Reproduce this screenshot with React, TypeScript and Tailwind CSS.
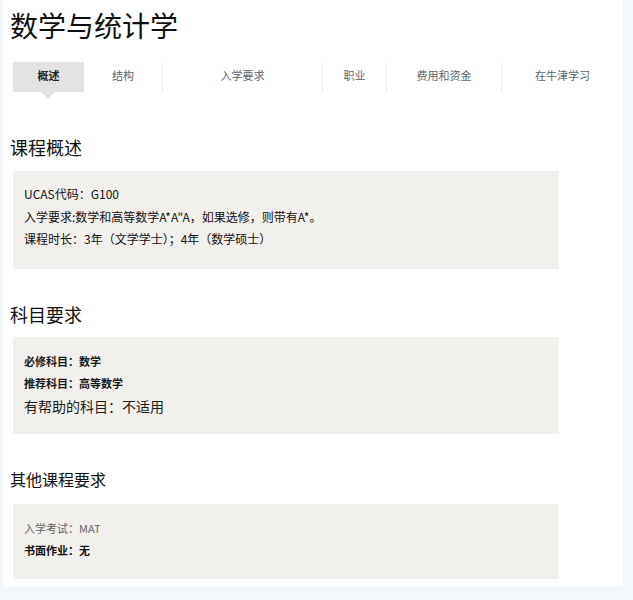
const font = { fontFamily: '"Noto Sans CJK SC", "Noto Sans", sans-serif' };

const tabs = [
  { label: "结构", w: "w-[78px]" },
  { label: "入学要求", w: "w-[160px]" },
  { label: "职业", w: "w-[64px]" },
  { label: "费用和资金", w: "w-[115px]" },
  { label: "在牛津学习", w: "w-[122px]" },
];

export default function App() {
  return (
    <div className="min-h-[600px] w-[633px] bg-[#f3f8fd] pl-[3px]" style={font}>
      <div className="w-[620px] h-[587px] bg-white">
        <h1 className="pl-[7px] pt-[6px] text-[28px] leading-[38px] text-[#111]">
          数学与统计学
        </h1>

        <div className="mt-[18px] ml-[10px] flex h-[30px] items-stretch">
          <div className="relative flex w-[71px] items-center justify-center bg-[#e3e3e1] pb-[4px] text-[11px] font-bold text-[#222]">
            概述
            <span className="absolute left-[28px] top-[30px] h-0 w-0 border-x-[7px] border-t-[7px] border-x-transparent border-t-[#e3e3e1]" />
          </div>
          {tabs.map((t, i) => (
            <div
              key={t.label}
              className={`flex items-center justify-center pb-[4px] text-[11px] text-[#5b6670] ${t.w} ${
                i > 0 ? "border-l border-[#ebebeb]" : ""
              }`}
            >
              {t.label}
            </div>
          ))}
        </div>

        <h2 className="mt-[43px] pl-[7px] text-[18px] leading-[24px] text-[#111]">课程概述</h2>
        <div className="ml-[10px] mt-[12px] h-[98px] w-[546px] bg-[#f1f0ec] pl-[11px] pt-[12px] text-[12px] leading-[22.5px] text-[#111]">
          <p>UCAS代码：G100</p>
          <p>入学要求:数学和高等数学A*A"A，如果选修，则带有A*。</p>
          <p>课程时长：3年（文学学士）；4年（数学硕士）</p>
        </div>

        <h2 className="mt-[33px] pl-[7px] text-[18px] leading-[24px] text-[#111]">科目要求</h2>
        <div className="ml-[10px] mt-[11px] h-[97px] w-[546px] bg-[#f1f0ec] pl-[11px] pt-[13px] text-[#1a1a1a]">
          <p className="text-[11px] font-bold leading-[22px]">必修科目：数学</p>
          <p className="text-[11px] font-bold leading-[22px]">推荐科目：高等数学</p>
          <p className="text-[14px] leading-[24px]">有帮助的科目：不适用</p>
        </div>

        <h2 className="mt-[34px] pl-[7px] text-[16px] leading-[22px] text-[#111]">其他课程要求</h2>
        <div className="ml-[10px] mt-[14px] h-[75px] w-[546px] bg-[#f1f0ec] pl-[11px] pt-[13px] text-[11px] leading-[22px]">
          <p className="text-[#666]">入学考试：MAT</p>
          <p className="font-bold text-[#111]">书面作业：无</p>
        </div>
      </div>
    </div>
  );
}
